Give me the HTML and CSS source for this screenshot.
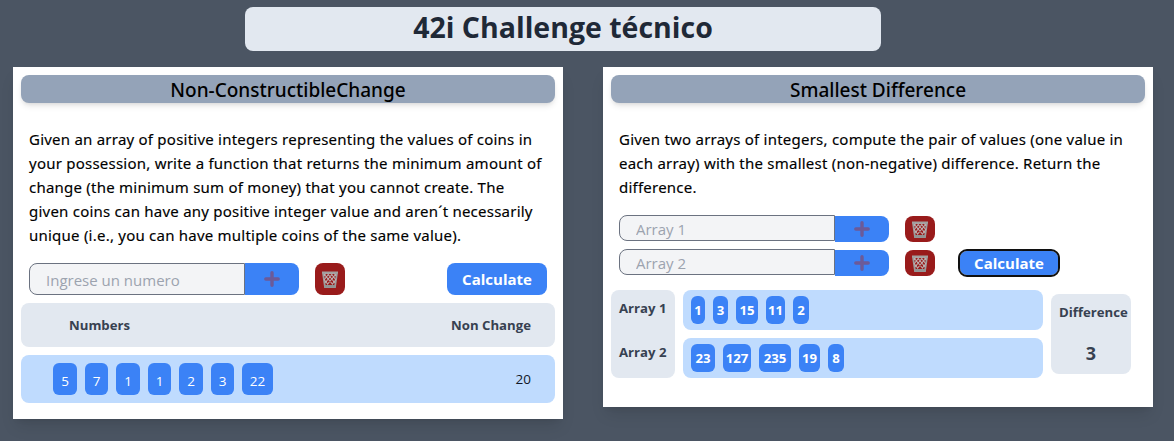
FILE: index.html
```html
<!DOCTYPE html>
<html lang="es">
<head>
<meta charset="utf-8">
<title>42i Challenge técnico</title>
<link rel="stylesheet" href="styles.css">
</head>
<body>
<svg class="defs" width="0" height="0" aria-hidden="true">
  <symbol id="plus" viewBox="0 0 16 16"><path d="M8 1.800v12.400M1.800 8h12.400" fill="none" stroke="#6c5a98" stroke-width="3.400" stroke-linecap="round"/></symbol>
  <symbol id="trash" viewBox="0 0 16 17">
    <path d="M1 2L3 16H13L15 2Z" fill="#991b1b" stroke="#9b9b9b" stroke-width="1.800"/>
    <path d="M2 3L12 15M5 2L13 12M8.500 2L14 9M12 2L14 5M14 3L4 15M11 2L3 12M7.500 2L2 9M4 2L2 5M2.500 9L7.500 15.500M13.500 9L8.500 15.500" fill="none" stroke="#bcaeae" stroke-width="1.150"/>
    <path d="M0 1.500H16" stroke="#a3a09f" stroke-width="2"/>
    <path d="M2.500 15.300H13.500" stroke="#929292" stroke-width="2.600"/>
  </symbol>
</svg>
<header class="banner"><h1>42i Challenge técnico</h1></header>
<main class="cards">
  <section class="card card-change">
    <h2>Non-ConstructibleChange</h2>
    <p class="intro">Given an array of positive integers representing the values of coins in<br>your possession, write a function that returns the minimum amount of<br>change (the minimum sum of money) that you cannot create. The<br>given coins can have any positive integer value and aren´t necessarily<br>unique (i.e., you can have multiple coins of the same value).</p>
    <div class="entry tall">
      <input type="text" placeholder="Ingrese un numero">
      <button class="add" aria-label="+"><svg><use href="#plus"/></svg></button>
      <button class="clear"><svg><use href="#trash"/></svg></button>
      <button class="calc">Calculate</button>
    </div>
    <div class="heading"><span>Numbers</span><span>Non Change</span></div>
    <div class="numbers">
      <div class="chips"><b class="w24">5</b><b>7</b><b class="w24">1</b><b>1</b><b class="w24">2</b><b>3</b><b class="w31">22</b></div>
      <span>20</span>
    </div>
  </section>
  <section class="card card-diff">
    <h2>Smallest Difference</h2>
    <p class="intro">Given two arrays of integers, compute the pair of values (one value in<br>each array) with the smallest (non-negative) difference. Return the<br>difference.</p>
    <div class="entry">
      <input type="text" placeholder="Array 1">
      <button class="add" aria-label="+"><svg><use href="#plus"/></svg></button>
      <button class="clear"><svg><use href="#trash"/></svg></button>
    </div>
    <div class="entry">
      <input type="text" placeholder="Array 2">
      <button class="add" aria-label="+"><svg><use href="#plus"/></svg></button>
      <button class="clear"><svg><use href="#trash"/></svg></button>
      <button class="calc focused">Calculate</button>
    </div>
    <div class="result">
      <div class="labels"><span>Array 1</span><span>Array 2</span></div>
      <div class="arrays">
        <div class="array"><b class="n14">1</b><b class="n15">3</b><b class="n22">15</b><b class="n19">11</b><b class="n16">2</b></div>
        <div class="array"><b class="n24">23</b><b class="n28">127</b><b class="n32">235</b><b class="n21">19</b><b class="n16">8</b></div>
      </div>
      <div class="difference"><span>Difference</span><strong>3</strong></div>
    </div>
  </section>
</main>
</body>
</html>
```

FILE: styles.css
```css
* { box-sizing: border-box; }
body { margin: 0; padding-top: 7px; height: 441px; overflow: hidden; background: #4b5563; font-family: "Open Sans", "Noto Sans", sans-serif; color: #000; }
.defs { display: block; height: 0; }
.banner { width: 636px; height: 44px; margin-left: 245px; border-radius: 8px; background: #e2e8f0; text-align: center; }
h1 { margin: 0; font-size: 28.500px; line-height: 40px; font-weight: 700; color: #1f2937; white-space: nowrap; }
.cards { display: flex; align-items: flex-start; gap: 40px; margin: 16px 0 0 13px; }
.card { width: 550px; flex: none; padding: 8px; background: #fff; box-shadow: 0 10px 15px -3px rgba(0,0,0,.1), 0 4px 6px -4px rgba(0,0,0,.1); }
.card-change { height: 352px; }
.card-diff { height: 340px; }
h2 { margin: 0 0 24px; height: 28px; border-radius: 8px; background: #94a3b8; font-family: "Noto Sans", sans-serif; font-size: 19px; line-height: 30px; font-weight: 500; text-align: center; box-shadow: 0 4px 6px -1px rgba(0,0,0,.1), 0 2px 4px -2px rgba(0,0,0,.1); }
.intro { margin: 0 8px 16px; font-family: "Noto Sans", sans-serif; font-size: 15px; line-height: 24px; font-weight: 400; letter-spacing: .23px; -webkit-text-stroke: .15px #000; white-space: nowrap; }
.entry { display: flex; height: 26px; margin: 0 8px 8px; }
button { border: 0; padding: 0; font-family: inherit; display: flex; align-items: center; justify-content: center; }
input { width: 216px; height: 26px; margin: 0; padding: 2px 16px 0; border: 1px solid #6b7280; border-radius: 8px 0 0 8px; background: #f3f4f6; font-family: inherit; font-size: 15px; }
input::placeholder { color: #9ca3af; }
.add { width: 54px; height: 26px; border-radius: 0 8px 8px 0; background: #3b82f6; }
.add svg { width: 16px; height: 16px; }
.clear { width: 30px; height: 26px; margin-left: 16px; border-radius: 8px; background: #991b1b; }
.clear svg { width: 16px; height: 17px; }
.calc { width: 100px; height: 32px; margin-left: auto; border-radius: 8px; background: #3b82f6; color: #fff; font-size: 15px; font-weight: 700; }
.calc.focused { width: 98px; height: 24px; margin: 2px 0 0 25px; outline: 2px solid #101010; border-radius: 7px; }
.tall, .tall input, .tall .add, .tall .clear { height: 32px; }
.card-diff .add, .card-diff .clear { position: relative; top: 1px; }
.heading { display: flex; justify-content: space-between; height: 44px; padding: 0 24px 0 48px; border-radius: 8px; background: #e2e8f0; color: #374151; font-size: 13.200px; line-height: 44px; font-weight: 700; }
.numbers { display: flex; justify-content: space-between; height: 48px; margin-top: 8px; padding: 8px 24px 8px 32px; border-radius: 8px; background: #bfdbfe; font-size: 13.500px; line-height: 32px; color: #111827; }
.chips { display: flex; gap: 8px; }
.chips b { width: 23px; height: 32px; padding-top: 2px; border-radius: 6px; background: #3b82f6; color: #fff; text-align: center; font-weight: 400; }
.chips .w24 { width: 24px; }
.chips .w31 { width: 31px; }
.result { display: flex; gap: 8px; margin-top: 15px; color: #374151; font-size: 13.200px; font-weight: 700; }
.labels { display: grid; grid-template-rows: 44px 44px; width: 64px; height: 88px; padding-left: 8px; border-radius: 8px; background: #e2e8f0; line-height: 36px; white-space: nowrap; }
.arrays { display: flex; flex-direction: column; gap: 8px; }
.array { display: flex; gap: 8px; width: 360px; height: 40px; padding: 6px 8px; border-radius: 8px; background: #bfdbfe; }
.array b { height: 28px; border-radius: 6px; background: #3b82f6; color: #fff; text-align: center; line-height: 28px; font-family: "Noto Sans", sans-serif; font-weight: 700; }
.n14 { width: 14px; } .n15 { width: 15px; } .n16 { width: 16px; } .n19 { width: 19px; }
.n21 { width: 21px; } .n22 { width: 22px; } .n24 { width: 24px; } .n28 { width: 28px; } .n32 { width: 32px; }
.difference { width: 80px; height: 80px; margin-top: 4px; padding-left: 8px; border-radius: 8px; background: #e2e8f0; line-height: 36px; white-space: nowrap; }
.difference strong { display: block; width: 64px; font-family: "Noto Sans", sans-serif; font-size: 18px; font-weight: 700; line-height: 46px; text-align: center; }
```
